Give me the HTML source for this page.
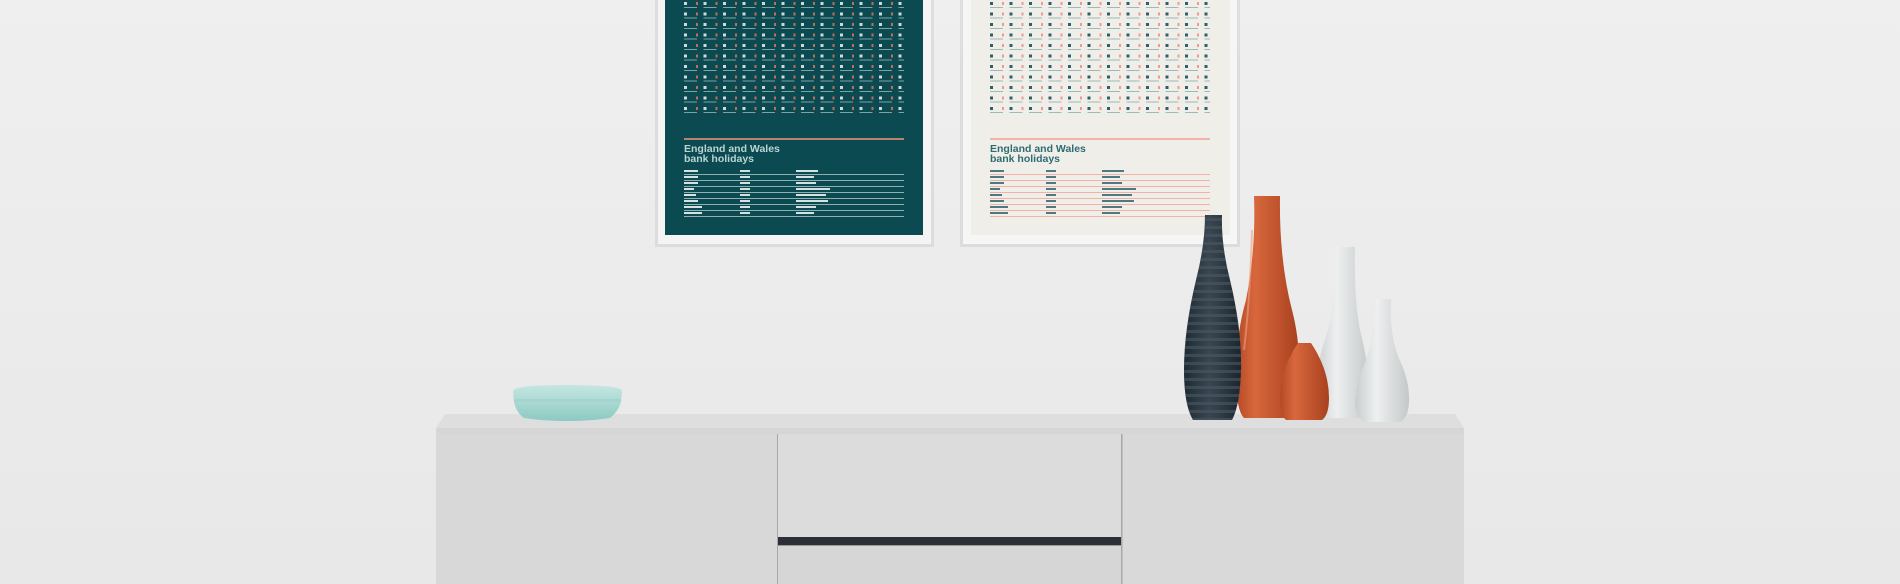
<!DOCTYPE html>
<html><head><meta charset="utf-8"><style>
html,body{margin:0;padding:0;width:1900px;height:584px;overflow:hidden;background:#ebebeb;font-family:"Liberation Sans",sans-serif}
svg{display:block}
</style></head><body>
<svg width="1900" height="584" viewBox="0 0 1900 584" xmlns="http://www.w3.org/2000/svg">
<defs>
<linearGradient id="wall" x1="0" y1="0" x2="0" y2="1"><stop offset="0" stop-color="#efefef"/><stop offset="1" stop-color="#e8e8e8"/></linearGradient>
<pattern id="calD" x="684" y="0" width="19.5" height="10.5" patternUnits="userSpaceOnUse">
<rect x="0" y="2" width="3" height="3" fill="#cfd9d9"/><rect x="0" y="7" width="13" height="1" fill="#7fa3a3"/><rect x="12" y="2" width="2" height="3" fill="#c86a55"/>
</pattern>
<pattern id="calL" x="990" y="0" width="19.5" height="10.5" patternUnits="userSpaceOnUse">
<rect x="0" y="2" width="3" height="3" fill="#2f5f68"/><rect x="0" y="7" width="13" height="1" fill="#9bbab8"/><rect x="12" y="2" width="2" height="3" fill="#ef9a8c"/>
</pattern>
<linearGradient id="dark" x1="0" x2="1"><stop offset="0" stop-color="#1e2a33"/><stop offset=".45" stop-color="#3a4752"/><stop offset="1" stop-color="#1b252d"/></linearGradient>
<pattern id="ribs" width="60" height="8" patternUnits="userSpaceOnUse" x="0" y="2"><rect width="60" height="3" fill="#4a5862" opacity=".6"/></pattern>
<linearGradient id="org" x1="0" x2="1"><stop offset="0" stop-color="#b34a26"/><stop offset=".3" stop-color="#d8673c"/><stop offset="1" stop-color="#a8411f"/></linearGradient>
<linearGradient id="wht" x1="0" x2="1"><stop offset="0" stop-color="#c9cdcf"/><stop offset=".4" stop-color="#eef0f0"/><stop offset="1" stop-color="#c4c8ca"/></linearGradient>
<linearGradient id="bowl" x1="0" y1="0" x2="0" y2="1"><stop offset="0" stop-color="#c5e6e2"/><stop offset=".5" stop-color="#a9d8d2"/><stop offset="1" stop-color="#8ccac3"/></linearGradient>
</defs>
<rect width="1900" height="584" fill="url(#wall)"/>
<!-- dark poster -->
<rect x="655" y="0" width="279" height="247" fill="#d2d2d2" opacity=".6"/>
<rect x="658" y="0" width="273" height="244" fill="#f4f4f4"/>
<rect x="665" y="0" width="258" height="235" fill="#0c4a52"/>
<rect x="684" y="0" width="220" height="113" fill="url(#calD)"/>
<rect x="684" y="138" width="220" height="2" fill="#b8836f"/>
<text x="684" y="152" font-size="10.5" font-weight="bold" fill="#b9d4d2">England and Wales</text>
<text x="684" y="162" font-size="10.5" font-weight="bold" fill="#b9d4d2">bank holidays</text>
<g fill="#8fb0b0">
<rect x="684" y="174" width="220" height="1"/><rect x="684" y="180" width="220" height="1"/><rect x="684" y="186" width="220" height="1"/><rect x="684" y="192" width="220" height="1"/><rect x="684" y="198" width="220" height="1"/><rect x="684" y="204" width="220" height="1"/><rect x="684" y="210" width="220" height="1"/><rect x="684" y="216" width="220" height="1"/>
</g>
<g fill="#d4e2e2"><rect x="684" y="170" width="14" height="2"/><rect x="740" y="170" width="10" height="2"/><rect x="796" y="170" width="22" height="2"/>
<rect x="684" y="176" width="14" height="2"/><rect x="740" y="176" width="10" height="2"/><rect x="796" y="176" width="18" height="2"/>
<rect x="684" y="182" width="14" height="2"/><rect x="740" y="182" width="10" height="2"/><rect x="796" y="182" width="20" height="2"/>
<rect x="684" y="188" width="10" height="2"/><rect x="740" y="188" width="10" height="2"/><rect x="796" y="188" width="34" height="2"/>
<rect x="684" y="194" width="12" height="2"/><rect x="740" y="194" width="10" height="2"/><rect x="796" y="194" width="30" height="2"/>
<rect x="684" y="200" width="14" height="2"/><rect x="740" y="200" width="10" height="2"/><rect x="796" y="200" width="32" height="2"/>
<rect x="684" y="206" width="18" height="2"/><rect x="740" y="206" width="10" height="2"/><rect x="796" y="206" width="20" height="2"/>
<rect x="684" y="212" width="18" height="2"/><rect x="740" y="212" width="10" height="2"/><rect x="796" y="212" width="18" height="2"/></g>
<!-- light poster -->
<rect x="960" y="0" width="280" height="247" fill="#d2d2d2" opacity=".6"/>
<rect x="963" y="0" width="274" height="244" fill="#f6f6f6"/>
<rect x="971" y="0" width="259" height="235" fill="#efeee9"/>
<rect x="990" y="0" width="220" height="113" fill="url(#calL)"/>
<rect x="990" y="138" width="220" height="2" fill="#f2b4aa"/>
<text x="990" y="152" font-size="10.5" font-weight="bold" fill="#2f6c72">England and Wales</text>
<text x="990" y="162" font-size="10.5" font-weight="bold" fill="#2f6c72">bank holidays</text>
<g fill="#f2b0a6">
<rect x="990" y="174" width="220" height="1"/><rect x="990" y="180" width="220" height="1"/><rect x="990" y="186" width="220" height="1"/><rect x="990" y="192" width="220" height="1"/><rect x="990" y="198" width="220" height="1"/><rect x="990" y="204" width="220" height="1"/><rect x="990" y="210" width="220" height="1"/><rect x="990" y="216" width="220" height="1"/>
</g>
<g fill="#4d7a80"><rect x="990" y="170" width="14" height="2"/><rect x="1046" y="170" width="10" height="2"/><rect x="1102" y="170" width="22" height="2"/>
<rect x="990" y="176" width="14" height="2"/><rect x="1046" y="176" width="10" height="2"/><rect x="1102" y="176" width="18" height="2"/>
<rect x="990" y="182" width="14" height="2"/><rect x="1046" y="182" width="10" height="2"/><rect x="1102" y="182" width="20" height="2"/>
<rect x="990" y="188" width="10" height="2"/><rect x="1046" y="188" width="10" height="2"/><rect x="1102" y="188" width="34" height="2"/>
<rect x="990" y="194" width="12" height="2"/><rect x="1046" y="194" width="10" height="2"/><rect x="1102" y="194" width="30" height="2"/>
<rect x="990" y="200" width="14" height="2"/><rect x="1046" y="200" width="10" height="2"/><rect x="1102" y="200" width="32" height="2"/>
<rect x="990" y="206" width="18" height="2"/><rect x="1046" y="206" width="10" height="2"/><rect x="1102" y="206" width="20" height="2"/>
<rect x="990" y="212" width="18" height="2"/><rect x="1046" y="212" width="10" height="2"/><rect x="1102" y="212" width="18" height="2"/></g>
<!-- sideboard -->
<polygon points="445,414 1455,414 1464,428 436,428" fill="#dedede"/>
<rect x="436" y="428" width="1028" height="6" fill="#d6d6d6"/>
<rect x="436" y="434" width="1028" height="150" fill="#dadada"/>
<rect x="436" y="434" width="341" height="150" fill="#d8d8d8"/>
<rect x="1122" y="434" width="342" height="150" fill="#d9d9d9"/>
<rect x="777" y="434" width="1.5" height="150" fill="#a8a8a8"/>
<rect x="1121" y="434" width="1.5" height="150" fill="#a8a8a8"/>
<rect x="778" y="434" width="343" height="103" fill="#dcdcdc"/>
<rect x="778" y="537" width="343" height="8" fill="#2c2f36"/>
<rect x="778" y="545" width="343" height="1" fill="#9a9a9a"/>
<rect x="778" y="546" width="343" height="38" fill="#d6d6d6"/>
<!-- bowl -->
<path d="M513,391 Q513,385 567,385 Q622,385 622,391 L621,402 Q618,412 610,418 Q590,421 567,421 Q544,421 524,418 Q516,412 514,402 Z" fill="url(#bowl)"/>
<rect x="514" y="399" width="107" height="3" fill="#9fd1ca" opacity=".7"/>
<!-- tall orange -->
<path d="M1254,196 L1280,196 Q1279,260 1292,310 Q1300,340 1299,375 Q1298,410 1290,418 L1244,418 Q1236,410 1236,375 Q1236,335 1246,300 Q1256,250 1254,196 Z" fill="url(#org)"/>
<path d="M1252,230 Q1250,300 1244,350" stroke="#f0a080" stroke-width="2" fill="none" opacity=".6"/>
<!-- dark ribbed -->
<path d="M1205,215 L1222,215 Q1221,245 1230,280 Q1242,330 1241,370 Q1240,405 1232,420 L1193,420 Q1184,405 1184,370 Q1184,330 1196,280 Q1205,245 1205,215 Z" fill="url(#dark)"/>
<path d="M1205,215 L1222,215 Q1221,245 1230,280 Q1242,330 1241,370 Q1240,405 1232,420 L1193,420 Q1184,405 1184,370 Q1184,330 1196,280 Q1205,245 1205,215 Z" fill="url(#ribs)"/>
<!-- tall white -->
<path d="M1335,247 L1355,247 Q1354,300 1360,330 Q1370,370 1369,395 Q1368,413 1362,418 L1322,418 Q1315,412 1315,392 Q1316,365 1328,330 Q1336,300 1335,247 Z" fill="url(#wht)"/>
<!-- small orange -->
<path d="M1298,343 L1311,343 Q1329,370 1329,398 Q1329,415 1322,420 L1286,420 Q1280,415 1280,398 Q1280,370 1298,343 Z" fill="url(#org)"/>
<!-- small white -->
<path d="M1373,299 L1391,299 Q1389,340 1402,365 Q1410,385 1409,403 Q1408,418 1400,422 L1364,422 Q1355,416 1355,402 Q1356,385 1364,365 Q1375,340 1373,299 Z" fill="url(#wht)"/>
</svg>
</body></html>
